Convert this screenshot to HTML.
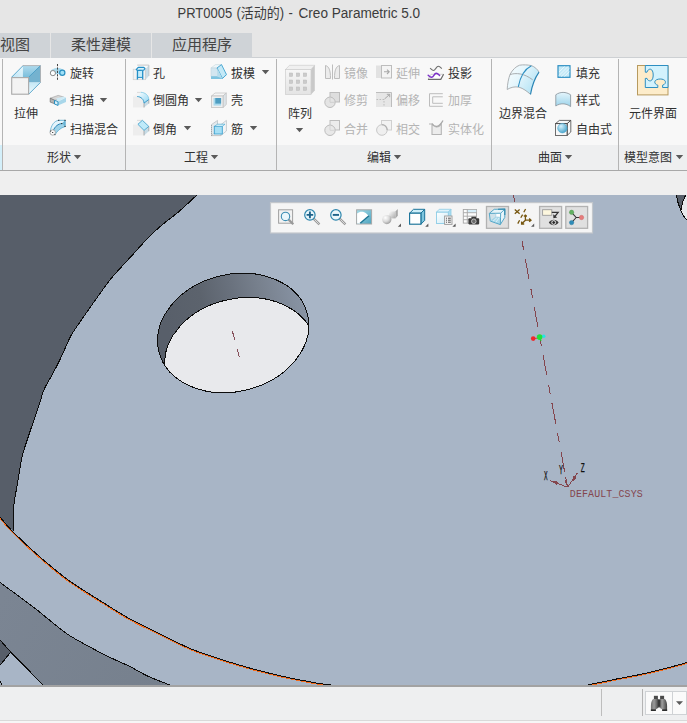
<!DOCTYPE html>
<html lang="zh-CN">
<head>
<meta charset="utf-8">
<title>PRT0005 (活动的) - Creo Parametric 5.0</title>
<style>
*{box-sizing:border-box;margin:0;padding:0}
html,body{width:687px;height:723px;overflow:hidden;background:#e6e6e6}
body{position:relative;font-family:"Liberation Sans","Noto Sans CJK SC",sans-serif;font-size:12px;color:#3a3a3a}
.abs{position:absolute}
#title{position:absolute;left:177.5px;top:4px;height:20px;line-height:20px;font-size:13px;transform:scaleY(1.06);transform-origin:0 50%;color:#3c3c3c;white-space:nowrap}
.tab{position:absolute;top:33px;height:25px;background:#cfd3d7;font-size:15px;line-height:24px;text-align:center;color:#444;white-space:nowrap}
#tabline{position:absolute;left:252px;top:57px;width:435px;height:1px;background:#cdd0d3}
#ribbon{position:absolute;left:0;top:58px;width:687px;height:87px;background:#f8f8f8}
#band{position:absolute;left:0;top:145px;width:687px;height:25px;background:#eeeff0}
#bandline{position:absolute;left:0;top:170px;width:687px;height:1px;background:#a8a8a8}
#below{position:absolute;left:0;top:171px;width:687px;height:24px;background:#efefef}
.vsep{position:absolute;top:59px;width:1px;height:111px;background:#b4b4b4}
.t{position:absolute;white-space:nowrap;font-size:12px;line-height:14px;color:#303030}
.dis{color:#b4b4b4}
.gl{position:absolute;top:151px;white-space:nowrap;font-size:12px;line-height:14px;color:#303030}
.tri{position:absolute;margin-left:-0.5px;width:8px;height:5px;background:#5a5a5a;clip-path:polygon(0.3px 0,7.7px 0,4px 4.2px)}
#view{position:absolute;left:0;top:195px;width:687px;height:490px}
#status{position:absolute;left:0;top:685px;width:687px;height:38px;background:#efefef}
</style>
</head>
<body>
<div id="title"><span style="position:absolute;left:0">PRT0005</span><span style="position:absolute;left:59px">(活动的)</span><span style="position:absolute;left:111px">-</span><span style="position:absolute;left:121px;font-size:13.6px">Creo Parametric 5.0</span></div>
<div class="tab" style="left:0;width:50px;text-align:left">视图</div>
<div class="tab" style="left:51px;width:100px">柔性建模</div>
<div class="tab" style="left:152px;width:100px">应用程序</div>
<div id="tabline"></div>
<div id="ribbon"></div>
<div id="band"></div>
<div id="bandline"></div>
<div id="below"></div>

<div class="abs" style="left:0;top:145px;width:2px;height:25px;background:#d3effa"></div>
<div class="vsep" style="left:2px"></div>
<div class="vsep" style="left:125px"></div>
<div class="vsep" style="left:276px"></div>
<div class="vsep" style="left:491px"></div>
<div class="vsep" style="left:618px"></div>

<div class="t" style="left:14px;top:107px">拉伸</div>
<div class="t" style="left:70px;top:66.5px">旋转</div>
<div class="t" style="left:70px;top:94px">扫描</div>
<div class="t" style="left:70px;top:122.5px">扫描混合</div>
<div class="tri" style="left:100px;top:98px"></div>
<div class="gl" style="left:47px">形状</div>
<div class="tri" style="left:74px;top:155px"></div>

<div class="t" style="left:153px;top:66.5px">孔</div>
<div class="t" style="left:153px;top:94px">倒圆角</div>
<div class="t" style="left:153px;top:122.5px">倒角</div>
<div class="tri" style="left:195px;top:98px"></div>
<div class="tri" style="left:184px;top:126px"></div>
<div class="t" style="left:231px;top:66.5px">拔模</div>
<div class="t" style="left:231px;top:94px">壳</div>
<div class="t" style="left:231px;top:122.5px">筋</div>
<div class="tri" style="left:262px;top:70px"></div>
<div class="tri" style="left:250px;top:126px"></div>
<div class="gl" style="left:184px">工程</div>
<div class="tri" style="left:211px;top:155px"></div>

<div class="t" style="left:288px;top:107px">阵列</div>
<div class="tri" style="left:296px;top:128px"></div>
<div class="t dis" style="left:344px;top:66.5px">镜像</div>
<div class="t dis" style="left:344px;top:94px">修剪</div>
<div class="t dis" style="left:344px;top:122.5px">合并</div>
<div class="t dis" style="left:396px;top:66.5px">延伸</div>
<div class="t dis" style="left:396px;top:94px">偏移</div>
<div class="t dis" style="left:396px;top:122.5px">相交</div>
<div class="t" style="left:448px;top:66.5px">投影</div>
<div class="t dis" style="left:448px;top:94px">加厚</div>
<div class="t dis" style="left:448px;top:122.5px">实体化</div>
<div class="gl" style="left:367px">编辑</div>
<div class="tri" style="left:394px;top:155px"></div>

<div class="t" style="left:499px;top:107px">边界混合</div>
<div class="t" style="left:576px;top:66.5px">填充</div>
<div class="t" style="left:576px;top:94px">样式</div>
<div class="t" style="left:576px;top:122.5px">自由式</div>
<div class="gl" style="left:538px">曲面</div>
<div class="tri" style="left:565px;top:155px"></div>

<div class="t" style="left:629px;top:107px">元件界面</div>
<div class="gl" style="left:624px">模型意图</div>
<div class="tri" style="left:676px;top:155px"></div>
<svg class="abs" style="left:0;top:0" width="687" height="195" viewBox="0 0 687 195">
<defs>
<linearGradient id="gTop" x1="0" y1="0" x2="1" y2="0"><stop offset="0" stop-color="#d9f0fa"/><stop offset="1" stop-color="#86c6e0"/></linearGradient>
<linearGradient id="gLow" x1="1" y1="0" x2="0" y2="1"><stop offset="0" stop-color="#bfe3f2"/><stop offset="1" stop-color="#f4fbfe"/></linearGradient>
<linearGradient id="gBlueV" x1="0" y1="0" x2="0" y2="1"><stop offset="0" stop-color="#e4f5fc"/><stop offset="1" stop-color="#9bd3ea"/></linearGradient>
<linearGradient id="gBlueH" x1="0" y1="0" x2="1" y2="0"><stop offset="0" stop-color="#f4fbfe"/><stop offset="1" stop-color="#a6daee"/></linearGradient>
<linearGradient id="gGrayBox" x1="0" y1="0" x2="0" y2="1"><stop offset="0" stop-color="#f6f6f6"/><stop offset="1" stop-color="#e4e4e4"/></linearGradient>
<linearGradient id="gBB" x1="0" y1="0" x2="1" y2="0.6"><stop offset="0" stop-color="#fbfeff"/><stop offset="0.45" stop-color="#e6f6fc"/><stop offset="1" stop-color="#b4e3f5"/></linearGradient>
<linearGradient id="gExA" x1="0" y1="1" x2="1" y2="0"><stop offset="0" stop-color="#bfe5f5"/><stop offset="1" stop-color="#eaf8fd"/></linearGradient>
<linearGradient id="gExB" x1="0" y1="0" x2="0" y2="1"><stop offset="0" stop-color="#afdaed"/><stop offset="1" stop-color="#7bbfdc"/></linearGradient>
<linearGradient id="gExC" x1="0" y1="0" x2="0" y2="1"><stop offset="0" stop-color="#c4e8f6"/><stop offset="1" stop-color="#eef9fd"/></linearGradient>
<linearGradient id="gFil" x1="0" y1="0" x2="1" y2="1"><stop offset="0" stop-color="#ffffff"/><stop offset="1" stop-color="#8fd6f3"/></linearGradient>
<radialGradient id="gSph" cx="0.35" cy="0.3" r="0.8"><stop offset="0" stop-color="#d6f1fb"/><stop offset="1" stop-color="#3f9fc8"/></radialGradient>
</defs>
<!-- extrude -->
<g>
<polygon points="11.6,77 22.9,65.8 22.9,77" fill="url(#gExA)"/>
<polygon points="22.9,65.8 40.4,65.8 28.9,77 22.9,77" fill="url(#gExB)"/>
<polygon points="40.4,65.8 40.4,82.4 28.9,82.4 28.9,77" fill="#74b2cf"/>
<polygon points="28.9,82.4 40.4,82.4 28.9,93.9" fill="url(#gExC)"/>
<path d="M22.6,65.6 L40.5,65.6 L40.5,82.6" fill="none" stroke="#a9adb0" stroke-width="0.9"/>
<path d="M11.8,77 L22.9,65.8 M28.9,77 L40.3,65.8 M28.9,94 L40.3,82.6" fill="none" stroke="#3d97c1" stroke-width="0.8"/>
<rect x="11.7" y="77.6" width="16.9" height="16.6" fill="#f3f3f3" stroke="#a9a9a9" stroke-width="1.1"/>
</g>
<!-- revolve -->
<g>
<path d="M50.3,72.5 C50.5,66.5 64.5,66.5 64.8,72.5 L64.8,74 L50.3,74 Z" fill="#a9d9ec"/>
<circle cx="52.9" cy="73.1" r="2.6" fill="#fff" stroke="#8a8a8a" stroke-width="1"/>
<circle cx="62.3" cy="72.8" r="2.6" fill="#9fe0f7" stroke="#2a8fc0" stroke-width="1.2"/>
<line x1="57.5" y1="64" x2="57.5" y2="80.5" stroke="#444" stroke-width="1" stroke-dasharray="2.2,1.2"/>
</g>
<!-- sweep -->
<g>
<polygon points="50.2,98.2 58.2,95.4 63.7,97 54.8,100.4" fill="#d6d6d6" stroke="#9a9a9a" stroke-width="0.6"/>
<polygon points="50.2,98.2 54.8,100.4 54.8,103.8 50.2,102.1" fill="#b4b4b4" stroke="#6a6a6a" stroke-width="0.7"/>
<polygon points="58,101.5 66,97.6 66,102 58,105.4" fill="#a9d7ea"/>
<polygon points="54.5,100.4 58,101.5 58,105.4 54.5,104" fill="#d8eff8" stroke="#2a8fc0" stroke-width="1"/>
<polygon points="56,98.5 63.7,96.5 66,97.6 58,101.5" fill="#cfeaf5"/>
</g>
<!-- swept blend -->
<g transform="translate(-0.8,0)">
<path d="M51,131.5 C52,125 55,121 59.5,120.3 L66,120.3 L66,126.5 C61,128 58,131 55.8,134.8 Z" fill="#e4f4fb"/>
<path d="M53.8,131 C56,126 59,124 62.5,123.5 L66,126.5 C61,128 58,131 55.8,134.8 Z" fill="#9ed3e9"/>
<path d="M62.5,123.5 L66,120.3 L66,126.5 Z" fill="#6fb9d9"/>
<path d="M51,131.5 C52,125 55,121 59.5,120.3 M55.8,134.8 C58,131 61,128 66,126.5" fill="none" stroke="#4aa3cc" stroke-width="0.7"/>
<path d="M53.8,131 C56,126 59,124 62.5,123.5" fill="none" stroke="#2a86b8" stroke-width="1"/>
<path d="M59.5,120.3 L66,120.3 L66,126.5" fill="none" stroke="#4aa3cc" stroke-width="0.8"/>
<circle cx="53.5" cy="132.5" r="2.7" fill="#fafafa" stroke="#9a9a9a" stroke-width="0.8"/>
<rect x="53" y="132" width="1" height="1" fill="#222"/>
<rect x="59" y="119.8" width="1.1" height="1.1" fill="#222"/><rect x="65.3" y="119.8" width="1.1" height="1.1" fill="#222"/><rect x="65.3" y="125.9" width="1.1" height="1.1" fill="#222"/><rect x="62" y="123" width="1.1" height="1.1" fill="#222"/><rect x="51" y="130.6" width="1" height="1" fill="#333"/><rect x="55.2" y="134.2" width="1" height="1" fill="#333"/>
</g>
<!-- hole -->
<g>
<polygon points="133.1,69.2 137.2,65.1 148.9,65.1 145.4,69.2" fill="#fafafa"/>
<path d="M137.2,65.1 L148.9,65.1" stroke="#bdbdbd" stroke-width="0.8" fill="none"/>
<polygon points="145.4,69.2 148.9,65.1 148.9,76 145.4,79.7" fill="#c9dde8"/>
<path d="M148.9,65.1 L148.9,76 M145.4,69.2 L145.4,79.7" stroke="#b4b8bb" stroke-width="0.7" fill="none"/>
<rect x="133.2" y="69.2" width="12.2" height="10.5" fill="#f2f2f2" stroke="#cfcfcf" stroke-width="0.7"/>
<rect x="137.6" y="70.4" width="5" height="7" fill="#c5edfb"/>
<path d="M136.2,69.6 L138.2,67.3 L143.8,67.3 L145,68.5 L143.6,70.3 L137.5,70.4 Z" fill="#d8f3fc" stroke="#2590c8" stroke-width="1.15" stroke-linejoin="round"/>
<path d="M137.5,70.4 L137.4,79.6 M142.7,70.4 L142.7,79.6" stroke="#2590c8" stroke-width="1.3" fill="none"/>
<path d="M138,77.4 L142.2,77.4 M139,70.4 L141.4,70.4" stroke="#2590c8" stroke-width="1" fill="none"/>
</g>
<!-- round -->
<g>
<polygon points="133,96.4 137.2,92.4 141,92.4 137.4,96.4" fill="#f5f5f5"/>
<path d="M137,92.4 L141,92.4" stroke="#d0d0d0" stroke-width="0.7"/>
<path d="M133,96.4 L137.2,96.4 C141.2,96.8 143.8,99.4 144,103.1 L144,107.5 L133,107.5 Z" fill="#ededed"/>
<path d="M144,103.1 L148.8,99.5 L148.8,103.6 L144,107.5 Z" fill="#c8dce6"/>
<path d="M144,103.1 L144,107.5 M148.8,99.5 L148.8,103.6" stroke="#a0a0a0" stroke-width="0.8" fill="none"/>
<path d="M137.2,96.5 L140.8,92.3 C145,92.4 148.6,95.2 148.8,99.5 L144,103.1 C143.8,99.4 141.2,96.8 137.2,96.5 Z" fill="url(#gFil)"/>
<path d="M140.8,92.3 C145,92.4 148.6,95.2 148.8,99.5" fill="none" stroke="#7cc8e6" stroke-width="0.8"/>
<path d="M137.2,96.5 C141.2,96.8 143.8,99.4 144,103.1 L148.8,99.5" fill="none" stroke="#2f93c4" stroke-width="0.9"/>
</g>
<!-- chamfer -->
<g>
<polygon points="133,124.4 137.2,120.4 142.4,120.4 137.9,124.4" fill="#f5f5f5"/>
<path d="M137,120.4 L142,120.4" stroke="#d0d0d0" stroke-width="0.7"/>
<path d="M133,124.4 L137.9,124.4 L144,130.4 L144,135.6 L133,135.6 Z" fill="#ededed"/>
<path d="M144,130.4 L148.8,126.4 L148.8,131.2 L144,135.5 Z" fill="#c8dce6"/>
<path d="M144,130.4 L144,135.5 M148.8,126.4 L148.8,131.2" stroke="#a0a0a0" stroke-width="0.8" fill="none"/>
<polygon points="137.9,124.3 142.4,120.3 148.8,126.4 144,130.4" fill="#bfeaf9" stroke="#3a9cc8" stroke-width="0.8" stroke-linejoin="round"/>
</g>
<!-- draft -->
<g>
<polygon points="211,68 215.5,64.6 221.5,64.6 217,68" fill="#eef6fa" stroke="#c6d6de" stroke-width="0.6"/>
<rect x="211" y="68" width="6.5" height="8.5" fill="#d3e6f0" stroke="#c0d4de" stroke-width="0.6"/>
<polygon points="211,76.2 222,76.2 226.4,73.4 226.4,75.2 221.8,79 211,79" fill="#7fc4e0"/>
<polygon points="217,68 221.5,64.6 226.4,74.5 222.5,78.5" fill="#c4e9f7" stroke="#3ea2cf" stroke-width="0.9" stroke-linejoin="round"/>
<polygon points="217.3,68.5 217.3,76.5 222.3,78.5" fill="#b5dcec"/>
</g>
<!-- shell -->
<g>
<polygon points="211.5,96 215,93 226.3,93 223,96" fill="#f6f6f6" stroke="#c0c0c0" stroke-width="0.7"/>
<polygon points="223,96 226.3,93 226.3,104.5 223,107.6" fill="#dde4e8" stroke="#c0c0c0" stroke-width="0.7"/>
<rect x="211.5" y="96" width="11.5" height="11.6" fill="#efefef" stroke="#bdbdbd" stroke-width="0.7"/>
<rect x="213.5" y="98" width="7.6" height="7.6" fill="#a9d9ed"/>
<rect x="215.3" y="98" width="5.8" height="5.6" fill="#4e9dc1"/>
</g>
<!-- rib -->
<g>
<polygon points="211.5,124.6 217.5,120.4 217.5,130.8 211.5,135.4" fill="#e2e8ec" stroke="#b4bcc2" stroke-width="0.7"/>
<polygon points="221,124.6 226.4,120.4 226.4,131 221,135.4" fill="#f2f4f6" stroke="#b4bcc2" stroke-width="0.7"/>
<rect x="214.3" y="126.4" width="8" height="7.6" fill="#a6dff5" stroke="#3ea2cf" stroke-width="0.9"/>
<polygon points="214.3,126.4 217.5,124.2 225,124.2 222.3,126.4" fill="#d4f0fa" stroke="#3ea2cf" stroke-width="0.6"/>
<line x1="211.5" y1="135.6" x2="221" y2="135.6" stroke="#777" stroke-width="0.8" stroke-dasharray="1,1"/>
<line x1="211.5" y1="125" x2="211.5" y2="135.6" stroke="#999" stroke-width="0.8" stroke-dasharray="1,1"/>
</g>
<!-- pattern -->
<g>
<polygon points="285.5,69.5 289.5,65.3 314.8,65.3 311,69.5" fill="#f0f0f0" stroke="#cfcfcf" stroke-width="0.7"/>
<polygon points="311,69.5 314.8,65.3 314.8,90.5 311,94.5" fill="#c9c9c9"/>
<rect x="285.5" y="69.5" width="25.5" height="25" fill="url(#gGrayBox)" stroke="#cdcdcd" stroke-width="0.7"/>
<g fill="#cbcbcb" stroke="#bcbcbc" stroke-width="0.5">
<rect x="289.3" y="73" width="3.4" height="3.4"/><rect x="296.3" y="73" width="3.4" height="3.4"/><rect x="303.3" y="73" width="3.4" height="3.4"/>
<rect x="289.3" y="80" width="3.4" height="3.4"/><rect x="296.3" y="80" width="3.4" height="3.4"/><rect x="303.3" y="80" width="3.4" height="3.4"/>
<rect x="289.3" y="87" width="3.4" height="3.4"/><rect x="296.3" y="87" width="3.4" height="3.4"/><rect x="303.3" y="87" width="3.4" height="3.4"/>
</g>
</g>
<!-- disabled: mirror, trim, merge -->
<g stroke="#bdbdbd" stroke-width="1" fill="#ececec">
<path d="M325.5,65.5 C329,66.5 330.5,70 330.5,78.5 L325.5,78.5 Z"/>
<path d="M339.5,65.5 C336,66.5 334.5,70 334.5,78.5 L339.5,78.5 Z"/>
<line x1="332.5" y1="64.5" x2="332.5" y2="79.5"/>
<rect x="330" y="92.5" width="9.5" height="9.5" fill="#dedede"/>
<circle cx="330" cy="102.3" r="5.2" fill="#e4e4e4"/>
<path d="M330,97 L330,102.3 L335.2,102.3" fill="none" stroke="#cfcfcf"/>
<rect x="330" y="120.5" width="9.5" height="9.5" fill="#ececec"/>
<circle cx="330" cy="130.3" r="5.2" fill="#e8e8e8"/>
<path d="M330,125 L330,130.3 L335.2,130.3" fill="none" stroke="#d4d4d4"/>
</g>
<!-- disabled: extend, offset, intersect -->
<g stroke="#bdbdbd" stroke-width="1" fill="#ececec">
<rect x="376" y="65.5" width="6" height="12.5" fill="#e2e2e2" stroke="none"/>
<rect x="381.5" y="65.5" width="10" height="12.5" fill="#f4f4f4"/>
<path d="M384,71.8 L389,71.8 M387,69.6 L389.2,71.8 L387,74" fill="none" stroke="#a8a8a8" stroke-width="1.1"/>
<rect x="376" y="92.5" width="15.5" height="14.5" fill="#e6e6e6" stroke="none"/>
<path d="M376,92.5 L391.5,92.5 L391.5,107" fill="none"/>
<path d="M376.5,99.5 L384,99.5 L384,107" fill="none" stroke-dasharray="1.6,1.4"/>
<path d="M384.5,99 L389.5,94.5 M386.8,94.3 L389.7,94.3 L389.7,97.2" fill="none" stroke="#a8a8a8"/>
<rect x="381.5" y="120.5" width="10" height="9.5" fill="#f2f2f2" stroke="#d0d0d0"/>
<circle cx="381.9" cy="130" r="5.3" fill="#efefef" stroke="#c8c8c8"/>
<path d="M381.9,124.7 A5.3,5.3 0 0 1 387.2,130" fill="none" stroke="#b0b0b0" stroke-width="1.2"/>
</g>
<!-- project -->
<g fill="none">
<path d="M430.1,68.2 C431.4,69.4 432.4,70.5 433.4,70.5 C435.4,70.5 436.3,66.3 438.3,66.3 C439.6,66.3 440.8,67.6 441.8,68.6" stroke="#6e6e6e" stroke-width="1.05"/>
<polygon points="428,79.4 431,74.3 443.6,74.3 440.8,79.4" fill="#ffffff"/>
<path d="M428,79.4 L431,74.3 L443.6,74.3" stroke="#c4c4c4" stroke-width="0.8"/>
<path d="M428,79.4 L440.8,79.4 L443.6,74.3" stroke="#6a6a6a" stroke-width="1.2"/>
<path d="M428.2,75.2 C429.4,76.4 430.4,77.3 431.5,77.3 C433.8,77.3 434,73.3 436.2,73.3 C437.6,73.3 438.6,74.4 439.6,75.4" stroke="#7b2fc8" stroke-width="1.45" stroke-linecap="round"/>
</g>
<!-- thicken (disabled) -->
<g fill="none" stroke="#bdbdbd" stroke-width="1">
<path d="M442.8,93.7 L429.5,93.7 L429.5,106.3 L442.8,106.3"/>
<path d="M442.8,96.8 L432.7,96.8 L432.7,103.3 L442.8,103.3"/>
</g>
<!-- solidify (disabled) -->
<g stroke="#b4b4b4" stroke-width="1.1" fill="#ececec">
<path d="M429,124 L432,124 L432,134.5 L441.3,134.5 L441.3,124 C438,129 434,127 432,124"/>
<path d="M432,123.5 C434.5,127.5 439,128 443,120.5" fill="none" stroke="#a8a8a8" stroke-width="1.3"/>
</g>
<!-- boundary blend -->
<g>
<path d="M507.2,89.5 C507.4,84 508.6,78 510.2,74.1 C512.5,69.8 516,66.4 519.6,65.2 C523,64.6 528,64.8 531.4,65.6 C534.6,66.8 537.4,69.2 539,72.1 C535.2,77.5 532,85.5 530.5,94.4 C527,91.2 523.2,88.4 519,87.2 C515,86.3 510.6,87.3 507.2,89.5 Z" fill="url(#gBB)"/>
<path d="M530.5,94.4 C527,91.2 523.2,88.4 519,87.2 C515,86.3 510.6,87.3 507.2,89.5 C507.4,84 508.6,78 510.2,74.1 C512.5,69.8 516,66.4 519.6,65.2 C523,64.6 528,64.8 531.4,65.6 C534.6,66.8 537.4,69.2 539,72.1" fill="none" stroke="#a4a8ab" stroke-width="0.9"/>
<path d="M510,74.6 C516,72.6 524,73.2 532.7,79.8" fill="none" stroke="#a0a4a7" stroke-width="0.9"/>
<path d="M539,72.1 C535.2,77.5 532,85.5 530.5,94.4" fill="none" stroke="#2a85b5" stroke-width="1.15"/>
<path d="M531.4,65.8 C526,68.5 520.5,75 518.3,86.9" fill="none" stroke="#2d8fc2" stroke-width="1.05"/>
</g>
<!-- fill -->
<g>
<rect x="558" y="65.7" width="12" height="11.6" fill="#c4e9f7" stroke="#2d8fc2" stroke-width="1.2"/>
<path d="M559,72 L564.5,66.5 M559,75.5 L568,66.5 M561,76.6 L569.5,68.2 M564.5,76.6 L569.5,71.6" stroke="#e9f8fd" stroke-width="0.9" fill="none"/>
</g>
<!-- style -->
<g>
<path d="M555.8,94.8 C560,91.6 566,91.6 570.6,94.8 L570.6,106.6 C566,103 560,103 555.8,106 Z" fill="url(#gBlueV)" stroke="#8e9aa2" stroke-width="0.9"/>
</g>
<!-- freestyle -->
<g fill="none" stroke="#4a4a4a" stroke-width="0.8">
<rect x="555.6" y="123.6" width="11.6" height="11.8"/>
<polygon points="555.6,123.6 559.4,120.4 570.8,120.4 567.2,123.6"/>
<polygon points="567.2,123.6 570.8,120.4 570.8,132 567.2,135.4"/>
<circle cx="562.4" cy="128.2" r="4.7" fill="url(#gSph)" stroke="#4aa6cf" stroke-width="0.6"/>
</g>
<!-- puzzle -->
<g>
<rect x="637.5" y="65.5" width="30.5" height="29.4" fill="#fdecca" stroke="#b79a5e" stroke-width="1"/>
<path d="M645.3,65.5 L668,65.5 L668,87.5 L662.6,87.5 L662.6,85.2 C665,84.6 665.6,82.8 665.4,81.6 C665,79.8 662.6,79 660.2,79 C657.6,79 655,80 654.8,81.8 C654.6,83.2 655.8,84.8 657.8,85.2 L657.8,87.5 L645.3,87.5 L645.3,78.4 L647,78.4 C647.6,80.6 649.4,81 650.6,80.8 C652.4,80.4 653.2,77.8 653.2,75 C653.2,72 652.2,69.4 650.4,69.2 C649,69 647.4,70.2 647,72.2 L645.3,72.2 Z" fill="#d2f2fd" stroke="#2d8fc2" stroke-width="1"/>
</g>

</svg>

<!--VIEWSTART--><svg id="view" viewBox="0 195 687 490" width="687" height="490" style="position:absolute;left:0;top:195px;display:block">
<defs>
<linearGradient id="gWall" gradientUnits="userSpaceOnUse" x1="170" y1="0" x2="310" y2="0"><stop offset="0" stop-color="#585f6a"/><stop offset="0.29" stop-color="#5c636d"/><stop offset="0.51" stop-color="#69717d"/><stop offset="0.72" stop-color="#78818e"/><stop offset="0.94" stop-color="#8590a0"/><stop offset="1" stop-color="#8893a3"/></linearGradient>
<linearGradient id="gBand" gradientUnits="userSpaceOnUse" x1="0" y1="600" x2="170" y2="690"><stop offset="0" stop-color="#7b8593"/><stop offset="1" stop-color="#76808d"/></linearGradient>
<clipPath id="cRim"><ellipse cx="233.19" cy="332.97" rx="76.6" ry="58.5" transform="rotate(-14.23 233.19 332.97)"/></clipPath>
</defs>
<rect x="0" y="195" width="687" height="490" fill="#a8b5c6"/>
<path d="M200.0,192.2 C199.5,192.7 200.4,191.8 196.8,195.1 C193.2,198.4 184.6,206.7 178.6,211.8 C172.6,216.9 166.2,221.3 161.1,225.7 C156.0,230.1 153.1,232.8 148.0,238.0 C142.9,243.2 136.2,250.9 130.6,257.0 C125.0,263.1 118.5,270.0 114.6,274.4 C110.7,278.8 110.9,278.7 107.3,283.5 C103.7,288.3 97.8,296.6 93.0,303.3 C88.2,310.1 82.3,318.5 78.6,324.0 C74.8,329.5 73.2,331.4 70.5,336.5 C67.8,341.6 65.2,348.5 62.4,354.5 C59.5,360.5 56.4,366.8 53.4,372.5 C50.4,378.2 46.5,384.2 44.4,388.7 C42.3,393.2 42.5,394.3 40.8,399.5 C39.0,404.7 36.7,411.8 33.9,420.0 C31.1,428.2 25.8,444.2 24.2,449.0 C23.7,450.9 22.4,454.8 21.3,460.6 C20.2,466.4 18.6,476.5 17.4,483.9 C16.2,491.3 14.6,497.3 13.9,505.2 C13.2,513.1 13.3,526.9 13.2,531.3 L0,517 L0,192 Z" fill="#575e69"/>
<path d="M200.0,192.2 C199.5,192.7 200.4,191.8 196.8,195.1 C193.2,198.4 184.6,206.7 178.6,211.8 C172.6,216.9 166.2,221.3 161.1,225.7 C156.0,230.1 153.1,232.8 148.0,238.0 C142.9,243.2 136.2,250.9 130.6,257.0 C125.0,263.1 118.5,270.0 114.6,274.4 C110.7,278.8 110.9,278.7 107.3,283.5 C103.7,288.3 97.8,296.6 93.0,303.3 C88.2,310.1 82.3,318.5 78.6,324.0 C74.8,329.5 73.2,331.4 70.5,336.5 C67.8,341.6 65.2,348.5 62.4,354.5 C59.5,360.5 56.4,366.8 53.4,372.5 C50.4,378.2 46.5,384.2 44.4,388.7 C42.3,393.2 42.5,394.3 40.8,399.5 C39.0,404.7 36.7,411.8 33.9,420.0 C31.1,428.2 25.8,444.2 24.2,449.0 C23.7,450.9 22.4,454.8 21.3,460.6 C20.2,466.4 18.6,476.5 17.4,483.9 C16.2,491.3 14.6,497.3 13.9,505.2 C13.2,513.1 13.3,526.9 13.2,531.3" fill="none" stroke="#0c0c0c" stroke-width="1" shape-rendering="crispEdges"/>
<path d="M-3.0,580.2 C-2.5,580.6 -6.2,577.8 0.0,582.4 C6.2,587.0 26.0,601.4 34.2,607.7 C42.4,614.0 43.4,615.3 49.4,620.0 C55.4,624.7 60.7,630.0 70.0,635.8 C79.3,641.6 95.1,649.9 105.1,655.0 C115.1,660.1 122.8,663.0 130.0,666.6 C137.2,670.2 141.7,673.4 148.3,676.4 C154.9,679.4 165.6,683.3 169.7,684.9 C173.8,686.5 172.4,686.0 173.0,686.2 L173,690 L-3,690 Z" fill="url(#gBand)"/>
<polygon points="0,639.9 10.7,652.1 0,665.3" fill="#575e69"/>
<polygon points="10.7,652.1 43.6,685.5 0,685.5 0,665.3" fill="#a8b5c6"/>
<path d="M0,639.9 L10.7,652.1 L43.6,685.5 M10.7,652.1 L0,665.3 M0,681 L2,685.5" fill="none" stroke="#0c0c0c" stroke-width="1" shape-rendering="crispEdges"/>
<path d="M-3.0,580.2 C-2.5,580.6 -6.2,577.8 0.0,582.4 C6.2,587.0 26.0,601.4 34.2,607.7 C42.4,614.0 43.4,615.3 49.4,620.0 C55.4,624.7 60.7,630.0 70.0,635.8 C79.3,641.6 95.1,649.9 105.1,655.0 C115.1,660.1 122.8,663.0 130.0,666.6 C137.2,670.2 141.7,673.4 148.3,676.4 C154.9,679.4 165.6,683.3 169.7,684.9 C173.8,686.5 172.4,686.0 173.0,686.2" fill="none" stroke="#0c0c0c" stroke-width="1" shape-rendering="crispEdges"/>
<path d="M-3.0,513.5 C-2.5,514.1 -2.7,513.9 0.0,517.0 C2.7,520.1 6.5,525.4 13.1,532.0 C19.7,538.6 30.2,548.5 39.4,556.5 C48.6,564.5 57.4,572.2 68.3,580.1 C79.2,588.0 94.8,597.3 105.1,603.8 C115.4,610.3 120.8,613.9 130.0,619.0 C139.2,624.1 150.4,629.2 160.6,634.2 C170.8,639.2 180.9,644.7 191.1,648.9 C201.3,653.1 211.5,656.3 221.7,659.6 C231.9,662.9 242.1,666.0 252.3,668.8 C262.5,671.6 272.7,674.1 282.9,676.4 C293.1,678.7 305.9,681.1 313.4,682.5 C320.9,683.9 324.3,684.1 328.1,684.6 C331.9,685.1 334.7,685.4 336.0,685.6" fill="none" stroke="#f26a1b" stroke-width="1" shape-rendering="crispEdges" transform="translate(-0.5,0.8)"/>
<path d="M-3.0,513.5 C-2.5,514.1 -2.7,513.9 0.0,517.0 C2.7,520.1 6.5,525.4 13.1,532.0 C19.7,538.6 30.2,548.5 39.4,556.5 C48.6,564.5 57.4,572.2 68.3,580.1 C79.2,588.0 94.8,597.3 105.1,603.8 C115.4,610.3 120.8,613.9 130.0,619.0 C139.2,624.1 150.4,629.2 160.6,634.2 C170.8,639.2 180.9,644.7 191.1,648.9 C201.3,653.1 211.5,656.3 221.7,659.6 C231.9,662.9 242.1,666.0 252.3,668.8 C262.5,671.6 272.7,674.1 282.9,676.4 C293.1,678.7 305.9,681.1 313.4,682.5 C320.9,683.9 324.3,684.1 328.1,684.6 C331.9,685.1 334.7,685.4 336.0,685.6" fill="none" stroke="#0c0c0c" stroke-width="1" shape-rendering="crispEdges"/>
<path d="M586.0,685.4 C586.6,685.3 584.7,685.6 589.6,684.6 C594.5,683.6 607.2,680.9 615.5,679.2 C623.8,677.5 631.6,676.3 639.5,674.6 C647.4,672.9 654.7,671.2 662.6,669.2 C670.5,667.2 682.4,663.8 687.0,662.5 C691.6,661.2 689.5,661.8 690.0,661.6" fill="none" stroke="#f26a1b" stroke-width="1" shape-rendering="crispEdges" transform="translate(0.3,0.9)"/>
<path d="M586.0,685.4 C586.6,685.3 584.7,685.6 589.6,684.6 C594.5,683.6 607.2,680.9 615.5,679.2 C623.8,677.5 631.6,676.3 639.5,674.6 C647.4,672.9 654.7,671.2 662.6,669.2 C670.5,667.2 682.4,663.8 687.0,662.5 C691.6,661.2 689.5,661.8 690.0,661.6" fill="none" stroke="#0c0c0c" stroke-width="1" shape-rendering="crispEdges"/>
<g>
<ellipse cx="233.19" cy="332.97" rx="76.6" ry="58.5" transform="rotate(-14.23 233.19 332.97)" fill="url(#gWall)"/>
<g clip-path="url(#cRim)"><ellipse cx="240.35" cy="356.64" rx="76.3" ry="58.3" transform="rotate(-11.64 240.35 356.64)" fill="#e8e9ec" stroke="#0c0c0c" stroke-width="1" shape-rendering="crispEdges"/></g>
<ellipse cx="233.19" cy="332.97" rx="76.6" ry="58.5" transform="rotate(-14.23 233.19 332.97)" fill="none" stroke="#0c0c0c" stroke-width="1" shape-rendering="crispEdges"/>
<path d="M232.2,330.7 L234.9,339.9 M237.2,349.1 L239.3,357.5" stroke="#86505a" stroke-width="1" fill="none" shape-rendering="crispEdges"/>
</g>
<path d="M676.3,195 C677,199 678,204 680.8,210.6 C682,214 684.5,218 688,221.4 L688,195 Z" fill="#e8e9ec"/>
<path d="M676.3,195 C677,199 678.6,205 681.4,210.2 C681.6,205 683,200 685.8,195 Z" fill="#575e69"/>
<path d="M676.3,195 C677,199 678,204 680.8,210.6 C682,214 684.5,218 688,221.4 M685.8,195 C683,200 681.6,205 681.4,210.2" fill="none" stroke="#0c0c0c" stroke-width="1" shape-rendering="crispEdges"/>
<path d="M513.5,195.0 L514.8,202.0 M522.0,241.0 L523.6,249.6 M525.3,258.8 L529.1,279.5 M530.9,288.9 L532.6,298.4 M534.2,307.0 L537.9,327.1 M539.7,337.0 L541.5,346.3 M543.1,355.0 L546.8,375.4 M548.7,385.4 L550.2,393.6 M551.9,403.0 L555.8,423.7 M557.5,433.0 L559.1,441.8 M561.0,451.8 L564.6,471.7 M565.7,477.3 L567.5,487.2" stroke="#84464e" stroke-width="1" fill="none" shape-rendering="crispEdges"/>
<line x1="533" y1="338.5" x2="540" y2="338" stroke="#e33" stroke-width="1"/>
<line x1="539.6" y1="337.1" x2="541" y2="341" stroke="#2c2" stroke-width="1.2"/>
<circle cx="543.7" cy="336.3" r="1.8" fill="#22e6e6"/>
<circle cx="533.2" cy="338.6" r="2.3" fill="#f02828"/>
<circle cx="539.6" cy="337.1" r="2.8" fill="#22e03a"/>
<g stroke="#84464e" stroke-width="1" fill="none" shape-rendering="crispEdges">
<path d="M567.6,487.2 L549.9,480.7 M567.6,487.2 L577.3,473.1"/>
<path d="M553.5,481 L557,484.4 L557.6,482.2 Z" fill="#84464e"/>
<path d="M573.2,476.6 L575.6,477.8 L573.6,480.4 Z" fill="#84464e"/>
<path d="M565.2,478.5 L566.6,483.5 L564.6,483.2 Z" fill="#84464e" stroke="none"/>
</g>
<g font-family="'Liberation Mono',monospace" font-size="12" fill="#111" stroke="#111" stroke-width="0.25">
<text x="544" y="479.6" textLength="3.6" lengthAdjust="spacingAndGlyphs">X</text>
<text x="559" y="473.6" textLength="4" lengthAdjust="spacingAndGlyphs">Y</text>
<text x="580.8" y="471.5" textLength="4" lengthAdjust="spacingAndGlyphs">Z</text>
</g>
<text x="569.8" y="496.8" font-family="'Liberation Mono',monospace" font-size="10" fill="#84464e" textLength="73" lengthAdjust="spacing" transform="translate(0,496.8) scale(1,1.18) translate(0,-496.8)">DEFAULT_CSYS</text>
<g id="tb">
<defs>
<linearGradient id="gTeal" x1="0" y1="0" x2="1" y2="1"><stop offset="0" stop-color="#a4dbe8"/><stop offset="1" stop-color="#4fa4bf"/></linearGradient>
<radialGradient id="gBall" cx="0.35" cy="0.3" r="0.75"><stop offset="0" stop-color="#ffffff"/><stop offset="0.55" stop-color="#d9d9d9"/><stop offset="1" stop-color="#9a9a9a"/></radialGradient>
<linearGradient id="gCubeG" x1="0" y1="0" x2="1" y2="1"><stop offset="0" stop-color="#fdfdfd"/><stop offset="1" stop-color="#a9a9a9"/></linearGradient>
<linearGradient id="gLB" x1="0" y1="0" x2="1" y2="1"><stop offset="0" stop-color="#ffffff"/><stop offset="1" stop-color="#cdebf7"/></linearGradient>
</defs>
<rect x="270.5" y="202.6" width="322" height="30.4" fill="#f5f5f5" stroke="#c3c7cc" stroke-width="1.2"/>
<!-- refit -->
<rect x="278.6" y="209.8" width="14" height="13.4" fill="#f2f2f2" stroke="#a0a0a0" stroke-width="1"/>
<line x1="288.6" y1="219.6" x2="293.3" y2="224.3" stroke="#9a9a9a" stroke-width="2.2"/>
<circle cx="285.5" cy="216.4" r="4.2" fill="#e9f6fb" stroke="#3b8db3" stroke-width="1.1"/>
<!-- zoom in -->
<line x1="313.6" y1="218.6" x2="319.4" y2="224.4" stroke="#9a9a9a" stroke-width="2.4"/>
<line x1="314.4" y1="219.4" x2="318.8" y2="223.8" stroke="#e2e2e2" stroke-width="0.9"/>
<circle cx="309.9" cy="214.9" r="5.2" fill="#eaf7fc" stroke="#2e86ad" stroke-width="1.2"/>
<path d="M306.6,214.9 L313.2,214.9 M309.9,211.6 L309.9,218.2" stroke="#1d6289" stroke-width="1.9"/>
<!-- zoom out -->
<line x1="339.6" y1="218.6" x2="345.4" y2="224.4" stroke="#9a9a9a" stroke-width="2.4"/>
<line x1="340.4" y1="219.4" x2="344.8" y2="223.8" stroke="#e2e2e2" stroke-width="0.9"/>
<circle cx="335.9" cy="214.9" r="5.2" fill="#eaf7fc" stroke="#2e86ad" stroke-width="1.2"/>
<path d="M332.8,214.9 L339,214.9" stroke="#1d6289" stroke-width="1.9"/>
<!-- repaint -->
<rect x="356.6" y="209.8" width="15" height="14.2" fill="url(#gTeal)" stroke="#a8a8a8" stroke-width="1"/>
<path d="M357.1,223.5 L357.1,213.4 C360,210.9 364,211.2 366.3,213.4 C367.4,214.4 368.4,215.4 369,216 L360.6,223.5 Z" fill="#ffffff"/>
<line x1="360.2" y1="223.2" x2="369" y2="215.7" stroke="#1b7594" stroke-width="1.5"/>
<!-- shading -->
<polygon points="389,211.4 391.4,208.9 397.8,208.9 395.4,211.4" fill="#f4f4f4"/>
<polygon points="395.4,211.4 397.8,208.9 397.8,215.8 395.4,218.4" fill="#a8a8a8"/>
<rect x="389" y="211.4" width="6.4" height="7" fill="url(#gCubeG)"/>
<circle cx="386.8" cy="219.6" r="4.6" fill="url(#gBall)"/>
<polygon points="401,223.6 401,226.8 397.8,226.8" fill="#5a5a5a"/>
<!-- display style -->
<polygon points="409.6,213.2 413.5,209.3 424.7,209.3 420.9,213.2" fill="#cdeef9" stroke="#1a7399" stroke-width="1" stroke-linejoin="round"/>
<polygon points="420.9,213.2 424.7,209.3 424.7,220.4 420.9,224.2" fill="#7fc6de" stroke="#1a7399" stroke-width="1" stroke-linejoin="round"/>
<rect x="409.6" y="213.2" width="11.3" height="11" fill="#ffffff" stroke="#1a7399" stroke-width="1.15"/>
<polygon points="428.4,223.6 428.4,226.8 425.2,226.8" fill="#5a5a5a"/>
<!-- saved orientations -->
<polygon points="436.5,212.2 439.2,209.3 451,209.3 448.3,212.2" fill="#dff3fb" stroke="#8dcde6" stroke-width="0.8"/>
<polygon points="448.3,212.2 451,209.3 451,220.8 448.3,223.5" fill="#aadcf0" stroke="#8dcde6" stroke-width="0.8"/>
<rect x="436.5" y="212.2" width="11.8" height="11.3" fill="url(#gLB)" stroke="#8dcde6" stroke-width="0.9"/>
<rect x="444.6" y="216" width="7.4" height="8.4" fill="#f2f2f2" stroke="#9a9a9a" stroke-width="0.9"/>
<path d="M446,218.2 L447,218.2 M448,218.2 L450.8,218.2 M446,220.2 L447,220.2 M448,220.2 L450.8,220.2 M446,222.2 L447,222.2 M448,222.2 L450.8,222.2" stroke="#444" stroke-width="0.9"/>
<polygon points="455.6,223.6 455.6,226.8 452.4,226.8" fill="#5a5a5a"/>
<!-- view manager -->
<rect x="463.3" y="209.5" width="13.2" height="13.6" fill="#fcfcfc" stroke="#a6a6a6" stroke-width="0.9"/>
<rect x="467.6" y="209.9" width="8.6" height="2.6" fill="#d5eefa"/>
<path d="M463.3,212.7 L476.5,212.7 M463.3,216.2 L476.5,216.2 M463.3,219.7 L476.5,219.7 M467.3,209.5 L467.3,223.1" stroke="#a6a6a6" stroke-width="0.9" fill="none"/>
<rect x="468.4" y="218.2" width="10.8" height="6.2" rx="0.8" fill="#3a3a3a"/>
<rect x="471.4" y="216.7" width="4.6" height="2" fill="#3a3a3a"/>
<circle cx="473.8" cy="221.3" r="2.3" fill="#6a6a6a" stroke="#c8c8c8" stroke-width="0.9"/>
<!-- perspective (toggled) -->
<rect x="486.5" y="206.5" width="22" height="21.8" fill="#e0e0e0" stroke="#b2b2b2" stroke-width="1.3"/>
<polygon points="489.3,213.4 500.7,213.2 500.3,224.6 490.3,221.1" fill="#cfe2ea"/>
<polygon points="495.8,213.3 500.7,213.2 500.5,217.3 495.8,217" fill="#fbfdfe"/>
<polygon points="490.3,221.1 495.8,217 500.5,217.3 500.3,224.6" fill="#a9d9ea"/>
<path d="M492.6,221.6 L497.2,217.4 M495.4,222.8 L499.2,217.8" stroke="#e3f4fa" stroke-width="0.9" fill="none"/>
<polygon points="489.3,213.4 494.2,209.3 504.8,209.1 500.7,213.2" fill="#e6f4f9"/>
<polygon points="500.7,213.2 504.8,209.1 504.8,217.4 500.3,224.6" fill="url(#gLB)"/>
<path d="M489.3,213.4 L494.2,209.3 L504.8,209.1 L504.8,217.4 L500.3,224.6 L490.3,221.1 Z M489.3,213.4 L500.7,213.2 L500.3,224.6 M500.7,213.2 L504.8,209.1" fill="none" stroke="#55a7c8" stroke-width="1" stroke-linejoin="round"/>
<path d="M498,209.2 L504.8,209.1 L504.8,215" fill="none" stroke="#2e88ad" stroke-width="1.1"/>
<path d="M495.8,213.3 L495.8,217 L490.3,221.1 M495.8,217 L500.5,217.3" fill="none" stroke="#9fcfe2" stroke-width="0.7"/>
<!-- datum display -->
<g stroke="#76560f" stroke-width="1.3" fill="none">
<path d="M514.8,209.6 L519.6,213.8 M519.6,209.6 L514.8,213.8"/>
<path d="M525.6,209 L523.8,212.2 M522.6,214.6 L520.8,217.8 M519.6,220.2 L517.8,223.6"/>
<path d="M525.4,220.2 L525.4,214.6 M523.8,216 L527,216 M525.4,220.2 L531,220.2 M529.2,218.6 L531,220.2 L529.2,221.8 M525.4,220.2 L521.8,223.8 M521.6,221.4 L521.6,224 L524.2,224"/>
</g>
<polygon points="534.2,223.6 534.2,226.8 531,226.8" fill="#5a5a5a"/>
<!-- annotation display (toggled) -->
<rect x="539.6" y="206.5" width="22" height="21.8" fill="#e0e0e0" stroke="#b2b2b2" stroke-width="1.3"/>
<rect x="542.6" y="209.7" width="9.2" height="5.6" fill="#fdf7de" stroke="#9c9c9c" stroke-width="0.9"/>
<path d="M551.8,212.3 L558.2,212.3 L554.4,217" stroke="#333" stroke-width="1.2" fill="none"/>
<polygon points="553.2,214.2 553.4,218.2 557.2,217.4" fill="#333"/>
<path d="M548.8,222.6 C551.2,218.8 556.2,218.8 558.6,222.6 C556.2,226.2 551.2,226.2 548.8,222.6 Z" fill="#3a3a3a"/>
<circle cx="553.7" cy="222.5" r="1.9" fill="#2a2a2a" stroke="#f0f0f0" stroke-width="1"/>
<!-- spin center (toggled) -->
<rect x="565.8" y="206.5" width="21.8" height="21.8" fill="#e0e0e0" stroke="#b2b2b2" stroke-width="1.3"/>
<path d="M571.6,212.3 L576.2,217.5 L581.4,217.5 M576.2,217.5 L571.6,222.6" stroke="#333" stroke-width="1.05" fill="none"/>
<circle cx="571.6" cy="212.3" r="2.2" fill="#62b062" stroke="#4a8f4a" stroke-width="0.4"/>
<circle cx="581.5" cy="217.5" r="2.2" fill="#e67c7c" stroke="#c95c5c" stroke-width="0.4"/>
<circle cx="571.6" cy="222.6" r="2.2" fill="#2e8cb8" stroke="#22739a" stroke-width="0.4"/>
</g>

</svg><!--VIEWEND-->
<div class="abs" style="left:0;top:685px;width:687px;height:2px;background:#a2a2a2"></div>
<div class="abs" style="left:0;top:687px;width:687px;height:33px;background:#eeeff0"></div>
<div class="abs" style="left:0;top:720px;width:687px;height:1px;background:#d9d9d9"></div>
<div class="abs" style="left:0;top:721px;width:687px;height:2px;background:#f6f6f6"></div>
<div class="abs" style="left:601px;top:689px;width:1px;height:27px;background:#bdbdbd"></div>
<div class="abs" style="left:642px;top:689px;width:1px;height:27px;background:#b4b4b4"></div>
<div class="abs" style="left:645px;top:691px;width:42px;height:24px;background:#fafafa;border:1px solid #cfd2d5"></div>
<div class="abs" style="left:672px;top:692px;width:1px;height:22px;background:#cfd2d5"></div>
<svg class="abs" style="left:645px;top:690px" width="42" height="26" viewBox="645 690 42 26">
<defs><linearGradient id="gBin" x1="0" y1="0" x2="1" y2="0"><stop offset="0" stop-color="#6e6e6e"/><stop offset="0.4" stop-color="#9a9a9a"/><stop offset="1" stop-color="#444444"/></linearGradient></defs>
<rect x="653.9" y="695.8" width="4" height="3.6" fill="#4a4a4a"/>
<rect x="660.1" y="695.8" width="4" height="3.6" fill="#4a4a4a"/>
<path d="M653.4,699 L658.6,699 L658.8,707.6 L656,709.2 L655.8,710.9 L650.9,710.9 L650.9,706 C650.9,703.5 651.6,701 652.4,699.8 Z" fill="url(#gBin)"/>
<path d="M659.4,699 L664.6,699 L665.6,699.8 C666.4,701 667.1,703.5 667.1,706 L667.1,710.9 L662.2,710.9 L662,709.2 L659.2,707.6 Z" fill="url(#gBin)"/>
<rect x="657.8" y="699.6" width="2.6" height="7.2" fill="#3a3a3a"/>
<rect x="650.9" y="709.4" width="4.9" height="1.6" fill="#2c2c2c"/>
<rect x="662.2" y="709.4" width="4.9" height="1.6" fill="#2c2c2c"/>
<polygon points="676,701.2 683,701.2 679.5,705" fill="#5a5a5a"/>
</svg>

</body>
</html>
